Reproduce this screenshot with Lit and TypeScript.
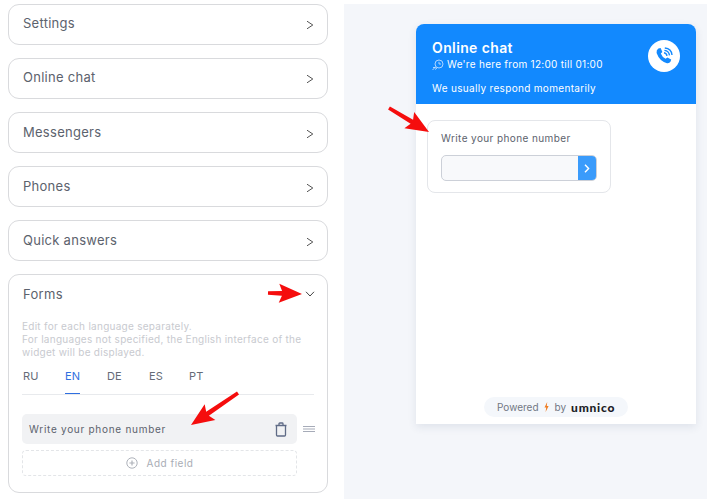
import { LitElement, html, css, svg } from "lit";
import { customElement } from "lit/decorators.js";

const arrow = (x1: number, y1: number, x2: number, y2: number) => {
  const a = Math.atan2(y2 - y1, x2 - x1);
  const len = Math.hypot(x2 - x1, y2 - y1);
  const deg = (a * 180) / Math.PI;
  return svg`<g transform="translate(${x1} ${y1}) rotate(${deg})"><path d="M0 -1.8 L${len - 20} -2.4 L${len - 23} -9.5 L${len} 0 L${len - 23} 9.5 L${len - 20} 2.4 L0 1.8 Z" fill="#f50d0d"/></g>`;
};

@customElement("app-root")
export class AppRoot extends LitElement {
  static styles = css`
    :host { display: block; width: 707px; height: 499px; position: relative; overflow: hidden; background: #fff; font-family: "Inter", "Noto Sans", sans-serif; color: #4b5563; }
    .page { display: flex; height: 499px; box-sizing: border-box; padding: 4px 0 0 8px; }
    .left { width: 320px; display: flex; flex-direction: column; gap: 13px; flex: none; }
    .card { box-sizing: border-box; width: 320px; height: 41px; border: 1px solid #d9dadd; border-radius: 11px; display: flex; align-items: center; justify-content: space-between; padding: 0 13px 3px 14px; font-size: 13px; letter-spacing: .27px; color: #5c626d; }
    .card:nth-child(n+3) { padding-bottom: 1px; }
    .chev { width: 8px; height: 10px; display: block; margin-top: 3px; }
    .forms { box-sizing: border-box; width: 320px; height: 219px; border: 1px solid #d9dadd; border-radius: 11px; padding: 11px 12px 0 13px; }
    .forms-head { display: flex; justify-content: space-between; align-items: center; font-size: 13px; letter-spacing: .3px; color: #5c626d; height: 16px; padding-left: 1px; }
    .hint { margin-top: 18px; font-size: 10px; line-height: 13px; color: #c8cacf; letter-spacing: .27px; white-space: nowrap; }
    .tabs { display: flex; margin-top: 9px; height: 26px; border-bottom: 1px solid #e8eaed; font-size: 11px; color: #656b77; padding-left: 1px; margin-right: 1px; }
    .tab { box-sizing: border-box; width: 42px; height: 26px; letter-spacing: .1px; padding-top: 1px; }
    .tab:nth-child(5) { margin-left: -2px; }
    .tab span { display: inline-block; height: 25px; box-sizing: border-box; }
    .tab.on span { color: #2f6fe0; border-bottom: 1px solid #2f6fe0; }
    .row { display: flex; align-items: center; margin-top: 19px; }
    .field { box-sizing: border-box; width: 275px; height: 30px; background: #f1f2f4; border-radius: 5px; display: flex; align-items: center; justify-content: space-between; padding: 0 10px 0 7px; font-size: 10px; letter-spacing: .72px; color: #5c626d; }
    .grip { width: 12px; height: 6px; margin-left: 6px; display: block; }
    .add { box-sizing: border-box; width: 275px; height: 26px; margin-top: 6px; border: 1px dashed #e3e5e8; border-radius: 4px; display: flex; align-items: center; justify-content: center; gap: 9px; font-size: 10px; letter-spacing: .5px; color: #a9adb5; }
    .right { width: 363px; margin-left: 16px; flex: none; background: #f4f6fa; padding: 20px 0 0 72px; box-sizing: border-box; }
    .widget { width: 280px; height: 400px; background: #fff; border-radius: 8px 8px 0 0; box-shadow: 0 3px 8px rgba(40,60,100,.1); display: flex; flex-direction: column; }
    .wh { box-sizing: border-box; height: 80px; background: #1289fe; border-radius: 8px 8px 0 0; padding: 15px 16px 0; color: #fff; display: flex; justify-content: space-between; }
    .wh h2 { margin: 0; font-size: 14px; line-height: 17px; font-weight: 600; letter-spacing: .38px; }
    .hours { display: flex; align-items: center; gap: 3px; font-size: 10px; line-height: 13px; letter-spacing: .28px; margin-top: 2px; font-weight: 400; }
    .resp { font-size: 10px; line-height: 13px; letter-spacing: .32px; margin-top: 11px; font-weight: 400; }
    .call { width: 32px; height: 32px; border-radius: 50%; background: #fff; display: flex; align-items: center; justify-content: center; margin-top: 1px; }
    .wb { flex: 1; padding: 16px 11px 0; display: flex; flex-direction: column; }
    .fc { box-sizing: border-box; width: 184px; height: 73px; border: 1px solid #e4e6ea; border-radius: 8px; padding: 11px 13px 0; font-size: 10px; letter-spacing: .4px; color: #5c626d; line-height: 13px; }
    .inp { box-sizing: border-box; width: 156px; height: 26px; margin-top: 10px; border: 1px solid #ccd0d8; border-radius: 5px; background: #f8f9fb; display: flex; justify-content: flex-end; }
    .btn { width: 18px; height: 24px; background: #3a9bfb; border-radius: 0 4px 4px 0; display: flex; align-items: center; justify-content: center; }
    .pw { margin: auto auto 7px; display: flex; align-items: center; width: 144px; height: 20px; box-sizing: border-box; background: #f4f7fb; border-radius: 10px; font-size: 10px; color: #727884; padding-left: 13px; }
    .pw .b { margin: 0 6px 0 5px; display: block; }
    .pw strong { font-family: "Lato", sans-serif; font-weight: 900; font-size: 12px; letter-spacing: .75px; color: #1b1d26; margin-left: 5px; }
    .arrows { position: absolute; left: 0; top: 0; width: 707px; height: 499px; pointer-events: none; }
  `;

  render() {
    const chev = html`<svg class="chev" viewBox="0 0 8 10"><path d="M1 1.2 L6.8 5 L1 8.8" fill="none" stroke="#555" stroke-width="1"/></svg>`;
    return html`
      <div class="page">
        <div class="left">
          ${["Settings", "Online chat", "Messengers", "Phones", "Quick answers"].map(
            (t) => html`<div class="card"><span>${t}</span>${chev}</div>`
          )}
          <div class="forms">
            <div class="forms-head"><span>Forms</span>
              <svg width="10" height="6" viewBox="0 0 10 6"><path d="M1 .8 L5 5 L9 .8" fill="none" stroke="#444" stroke-width="1"/></svg>
            </div>
            <div class="hint">Edit for each language separately.<br>For languages not specified, the English interface of the<br>widget will be displayed.</div>
            <div class="tabs">
              ${["RU", "EN", "DE", "ES", "PT"].map((t) => html`<div class="tab ${t === "EN" ? "on" : ""}"><span>${t}</span></div>`)}
            </div>
            <div class="row">
              <div class="field"><span>Write your phone number</span>
                <svg width="12" height="15" viewBox="0 0 12 15"><path d="M1.5 3.5 H10.5 V13 Q10.5 14 9.5 14 H2.5 Q1.5 14 1.5 13 Z M4 3.5 V1.8 Q4 1 4.8 1 H7.2 Q8 1 8 1.8 V3.5 M.5 3.5 H11.5" fill="none" stroke="#5f6b86" stroke-width="1.3"/></svg>
              </div>
              <svg class="grip" viewBox="0 0 12 6"><path d="M0 .5 H12 M0 3 H12 M0 5.5 H12" stroke="#a6abb8" stroke-width="1"/></svg>
            </div>
            <div class="add">
              <svg width="12" height="12" viewBox="0 0 12 12"><circle cx="6" cy="6" r="5.2" fill="none" stroke="#aeb2ba" stroke-width="1"/><path d="M6 3.4 V8.6 M3.4 6 H8.6" stroke="#aeb2ba" stroke-width="1.2"/></svg>
              <span>Add field</span>
            </div>
          </div>
        </div>
        <div class="right">
          <div class="widget">
            <div class="wh">
              <div>
                <h2>Online chat</h2>
                <div class="hours">
                  <svg width="12" height="12" viewBox="0 0 12 12"><circle cx="7" cy="5" r="4" fill="none" stroke="#d5e9ff" stroke-width=".8"/><path d="M7 2.8 V5 H9 M.5 11 L3.5 8 M1 8.5 H3.5 M3 10.5 L5 9" fill="none" stroke="#d5e9ff" stroke-width=".8"/></svg>
                  <span>We're here from 12:00 till 01:00</span>
                </div>
                <div class="resp">We usually respond momentarily</div>
              </div>
              <div class="call">
                <svg width="20" height="20" viewBox="0 0 20 20"><path d="M4.4 2.6 L6.6 2 L8.4 6 L6.8 7.6 Q8 11 11.6 12.8 L13.4 11.4 L17.2 13.4 L16.6 15.6 Q15.4 17.6 13 17.2 Q5.5 15.2 2.6 7 Q2.2 4 4.4 2.6 Z" fill="#1289fe"/><path d="M10 6.8 Q12.6 7.2 13 9.8 M10.4 4.4 Q15 5 15.5 9.4 M10.8 2 Q17.4 2.6 18 9" fill="none" stroke="#1289fe" stroke-width="1.4"/></svg>
              </div>
            </div>
            <div class="wb">
              <div class="fc">
                <div>Write your phone number</div>
                <div class="inp"><div class="btn">
                  <svg width="6" height="9" viewBox="0 0 6 9"><path d="M1 .8 L4.6 4.5 L1 8.2" fill="none" stroke="#fff" stroke-width="1.4"/></svg>
                </div></div>
              </div>
              <div class="pw"><span>Powered</span>
                <svg class="b" width="5" height="10" viewBox="0 0 5 10"><path d="M3.2 0 L.5 5.6 H2.2 L1.6 10 L4.6 4 H2.8 Z" fill="#ef7d22"/></svg>
                <span>by</span><strong>umnico</strong>
              </div>
            </div>
          </div>
        </div>
      </div>
      <svg class="arrows" viewBox="0 0 707 499">
        ${arrow(268, 293, 302, 294)}
        ${arrow(238, 393, 191, 425)}
        ${arrow(389, 108, 429, 132)}
      </svg>
    `;
  }
}
